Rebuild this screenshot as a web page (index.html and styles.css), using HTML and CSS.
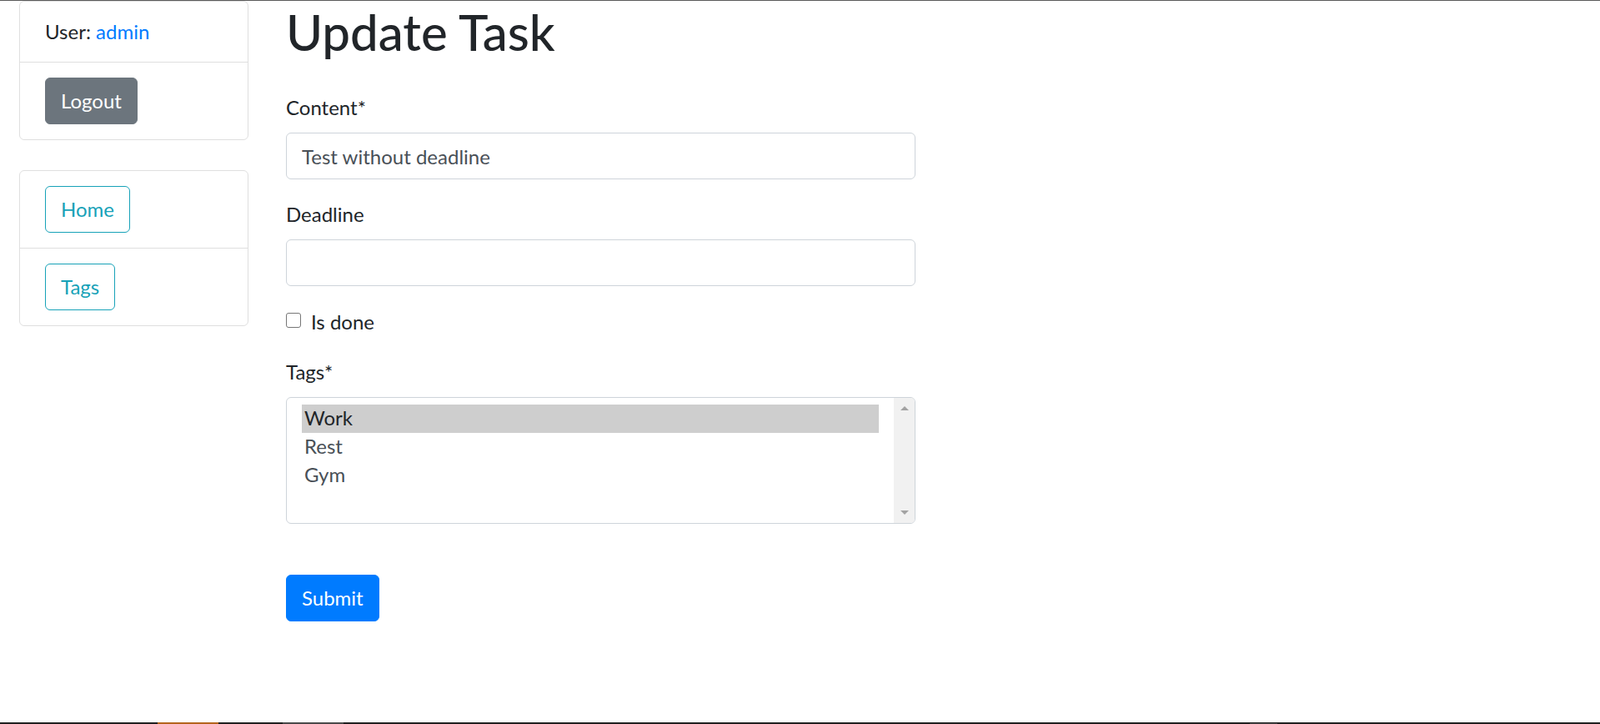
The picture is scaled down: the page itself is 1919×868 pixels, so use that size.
FILE: index.html
```html
<!DOCTYPE html>
<html lang="en">
<head>
<meta charset="utf-8">
<title>Update Task</title>
<link rel="stylesheet" href="styles.css">
</head>
<body>
<div class="layout">
  <aside class="sidebar">
    <div class="card">
      <div class="card-item">User: <a class="link" href="#">admin</a></div>
      <div class="card-item"><a class="btn btn-secondary" href="#">Logout</a></div>
    </div>
    <div class="card">
      <div class="card-item"><a class="btn btn-outline-info" href="#">Home</a></div>
      <div class="card-item"><a class="btn btn-outline-info" href="#">Tags</a></div>
    </div>
  </aside>
  <main class="main">
    <h1 class="title">Update Task</h1>
    <form class="form">
      <div class="field">
        <label class="label">Content*</label>
        <input class="input" type="text" value="Test without deadline">
      </div>
      <div class="field">
        <label class="label">Deadline</label>
        <input class="input" type="text" value="">
      </div>
      <div class="field check">
        <input class="check-box" type="checkbox" id="done">
        <label for="done">Is done</label>
      </div>
      <div class="field">
        <label class="label">Tags*</label>
        <div class="listbox">
          <div class="options">
            <div class="option selected">Work</div>
            <div class="option">Rest</div>
            <div class="option">Gym</div>
          </div>
          <div class="scrollbar">
            <span class="arrow arrow-up"></span>
            <span class="arrow arrow-down"></span>
          </div>
        </div>
      </div>
      <button class="btn btn-primary submit" type="button">Submit</button>
    </form>
  </main>
</div>
<div class="taskbar">
  <span class="seg seg-orange"></span>
  <span class="seg seg-gray"></span>
  <span class="seg seg-small"></span>
</div>
</body>
</html>
```
FILE: styles.css
```css
* { box-sizing: border-box; }
html, body { margin: 0; }
body {
  font-family: "Lato", "Noto Sans", sans-serif;
  font-size: 24px;
  line-height: 36px;
  color: #212529;
  background: #fff;
  border-top: 1px solid #5b5b5b;
  height: 868px;
  overflow: hidden;
}
.layout {
  display: flex;
  align-items: flex-start;
  padding-left: 23px;
  gap: 45px;
}
.sidebar {
  width: 275px;
  flex: none;
  display: flex;
  flex-direction: column;
  gap: 36px;
}
.card {
  border: 1px solid #dfdfdf;
  border-radius: 6px;
}
.card-item { padding: 18px 30px; }
.card-item + .card-item { border-top: 1px solid #dfdfdf; }
.link { color: #007bff; text-decoration: none; }
.btn {
  display: inline-block;
  vertical-align: top;
  padding: 9px 18px;
  border: 1px solid transparent;
  border-radius: 6px;
  font-family: inherit;
  font-size: 24px;
  line-height: 36px;
  text-decoration: none;
  cursor: pointer;
}
.btn-secondary { background: #6c757d; border-color: #6c757d; color: #fff; }
.btn-outline-info { background: #fff; border-color: #17a2b8; color: #17a2b8; }
.btn-primary { background: #007bff; border-color: #007bff; color: #fff; }
.main { width: 755px; flex: none; }
.title {
  font-size: 60px;
  line-height: 72px;
  font-weight: 500;
  margin: 1px 0 37px;
}
.field { margin-bottom: 24px; }
.label { display: block; margin-bottom: 12px; }
.input {
  display: block;
  width: 100%;
  height: 56px;
  padding: 9px 18px;
  border: 1px solid #ced4da;
  border-radius: 6px;
  font-family: inherit;
  font-size: 24px;
  line-height: 36px;
  color: #495057;
  background: #fff;
}
.check { position: relative; padding-left: 30px; padding-top: 1px; }
.check-box {
  position: absolute;
  left: 0;
  top: 8px;
  width: 18px;
  height: 18px;
  margin: 0;
  appearance: none;
  -webkit-appearance: none;
  border: 1px solid #767676;
  border-radius: 3px;
  background: #fff;
}
.listbox {
  display: flex;
  height: 152px;
  border: 1px solid #ced4da;
  border-radius: 6px;
  overflow: hidden;
}
.options { flex: 1; padding: 8px 18px; }
.option {
  padding: 0 3px 2px;
  line-height: 32px;
  color: #495057;
}
.option.selected { background: #cecece; color: #212529; }
.scrollbar {
  width: 25px;
  flex: none;
  background: #f1f1f1;
  display: flex;
  flex-direction: column;
  justify-content: space-between;
  align-items: center;
  padding: 10px 0 10px;
}
.arrow {
  width: 0;
  height: 0;
  border-left: 5px solid transparent;
  border-right: 5px solid transparent;
}
.arrow-up { border-bottom: 5px solid #a3a3a3; }
.arrow-down { border-top: 5px solid #a3a3a3; }
.submit { margin-top: 37px; }
.taskbar {
  position: fixed;
  left: 0;
  right: 0;
  bottom: 0;
  height: 2px;
  background: #202020;
  display: flex;
}
.seg { height: 2px; display: block; }
.seg-orange { margin-left: 189px; width: 73px; background: #b5651d; }
.seg-gray { margin-left: 77px; width: 73px; background: #4a4a4a; }
.seg-small { margin-left: 1087px; width: 33px; background: #4a4a4a; height: 1px; margin-top: 1px; }
```
